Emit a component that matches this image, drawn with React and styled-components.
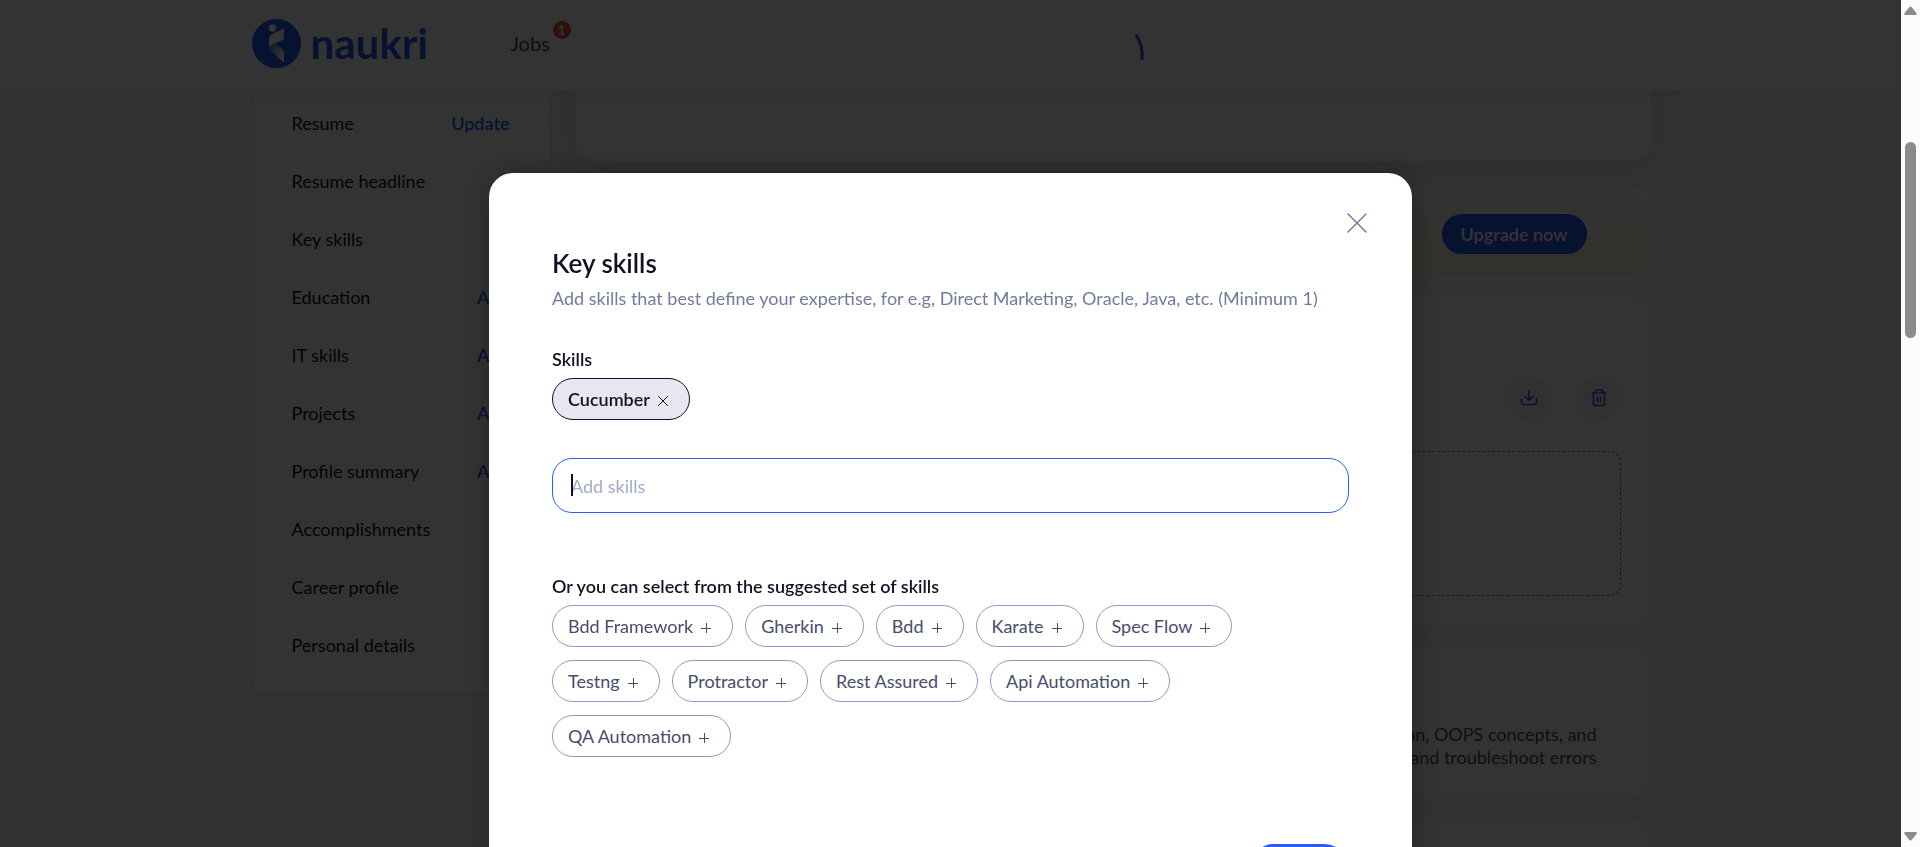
import React from 'react';
import styled, { createGlobalStyle } from 'styled-components';

const blue = '#275df5';
const ink = '#121224';
const slate = '#474d6a';
const muted = '#717b9e';

const Global = createGlobalStyle`
  * { box-sizing: border-box; }
  body {
    margin: 0;
    font: 400 18px/24px Lato, "Liberation Sans", sans-serif;
    color: ${ink};
    background: #f8f9fa;
    overflow: hidden;
  }
  h1, h2, p, ul { margin: 0; padding: 0; font: inherit; }
  ul { list-style: none; }
  a { color: inherit; text-decoration: none; }
  button, input { font: inherit; color: inherit; margin: 0; }
  button { cursor: pointer; }
  svg { display: block; flex: none; }
`;

const Viewport = styled.div`
  display: grid;
  grid-template-columns: minmax(0, 1fr) 19px;
  height: 100vh;
  overflow: hidden;
`;

const Page = styled.div`
  overflow: hidden;
`;

const Container = styled.div`
  display: flex;
  width: 100%;
  max-width: 1400px;
  margin: 0 auto;
`;

const Header = styled.header`
  position: relative;
  z-index: 1;
  background: #fff;
  box-shadow: 0 6px 12px rgba(30, 10, 58, 0.04);
`;

const HeaderInner = styled(Container)`
  align-items: center;
  height: 90px;
`;

const Logo = styled.a`
  display: flex;
  align-items: center;
  gap: 10px;
  width: 260px;
  color: ${blue};
  font-size: 42px;
  line-height: 48px;
  font-weight: 700;
  padding-bottom: 4px;
`;

const Jobs = styled.a`
  position: relative;
  padding-bottom: 4px;
  font-size: 20px;
  line-height: 24px;
  color: ${slate};
`;

const Badge = styled.span`
  position: absolute;
  left: 42px;
  top: -10px;
  width: 18px;
  height: 18px;
  border-radius: 9px;
  background: #f04a3c;
  color: #fff;
  font-size: 14px;
  line-height: 18px;
  font-weight: 700;
  text-align: center;
`;

const LoaderSlot = styled.div`
  flex: 1;
  display: flex;
  justify-content: center;
`;

const Body = styled(Container)`
  align-items: flex-start;
  gap: 25px;
`;

const Sidebar = styled.nav`
  width: 300px;
  flex: none;
  padding: 4px 40px 20px;
  background: #fff;
  border: 1px solid #e3e3ec;
  border-top: 0;
  border-radius: 0 0 12px 12px;
`;

const SideRow = styled.li`
  display: flex;
  align-items: center;
  justify-content: space-between;
  height: 58px;
`;

const SideAction = styled.a`
  color: ${blue};
  font-weight: 600;
`;

const Main = styled.main`
  flex: 1;
  min-width: 0;
  display: flex;
  flex-direction: column;
  gap: 20px;
`;

const Card = styled.section`
  min-height: ${(p) => p.$min}px;
  background: #fff;
  border-radius: 22px;
  box-shadow: 0 0 16px rgba(30, 10, 58, 0.06);
`;

const TopCard = styled(Card)`
  border-radius: 0 0 20px 20px;
  margin-bottom: 5px;
  box-shadow: 0 0 50px rgba(0, 0, 0, 0.14);
`;

const UpgradeCard = styled(Card)`
  display: flex;
  justify-content: flex-end;
  align-items: center;
  padding: 5px 64px 0 30px;
  background: linear-gradient(#fdfdfa, #fbf1dc);
  box-shadow: none;
`;

const UpgradeButton = styled.button`
  height: 40px;
  padding: 0 19px;
  border: 0;
  border-radius: 20px;
  background: ${blue};
  color: #fff;
  font-weight: 600;
`;

const ResumeCard = styled(Card)`
  padding: 80px 30px 30px;
`;

const ResumeActions = styled.div`
  display: flex;
  justify-content: flex-end;
  gap: 26px;
  margin-bottom: 31px;
`;

const RoundButton = styled.button`
  display: grid;
  place-items: center;
  width: 44px;
  height: 44px;
  border: 0;
  padding: 0;
  border-radius: 22px;
  background: #f6f6fb;
  color: ${blue};
`;

const DropZone = styled.div`
  height: 145px;
  border: 1px dashed ${muted};
  border-radius: 12px;
`;

const HeadlineCard = styled(Card)`
  padding: 77px 54px 29px 30px;
  line-height: 23px;
  color: ${slate};
  text-align: right;
`;

const ScrollTrack = styled.div`
  display: flex;
  flex-direction: column;
  align-items: center;
  padding: 6px 0;
  background: #fcfcfc;
`;

const ScrollThumb = styled.div`
  width: 11px;
  height: 196px;
  margin: 127px 0 auto;
  border-radius: 6px;
  background: #8b8b8b;
`;

const Overlay = styled.div`
  position: fixed;
  inset: 0 19px 0 0;
  z-index: 2;
  display: flex;
  justify-content: center;
  align-items: flex-start;
  padding-top: 173px;
  overflow: hidden;
  background: rgba(0, 0, 0, 0.8);
`;

const Modal = styled.div`
  display: flex;
  flex-direction: column;
  width: 923px;
  max-width: 100%;
  padding: 34px 63px 40px;
  border-radius: 24px;
  background: #fff;
  box-shadow: 0 0 30px rgba(0, 0, 0, 0.3);
`;

const CloseButton = styled.button`
  display: grid;
  place-items: center;
  align-self: flex-end;
  width: 32px;
  height: 32px;
  margin: 0 -24px 8px 0;
  padding: 0;
  border: 0;
  background: none;
  color: ${muted};
`;

const Title = styled.h1`
  font-size: 26px;
  line-height: 32px;
  font-weight: 600;
  margin-bottom: 7px;
`;

const Hint = styled.p`
  color: ${muted};
  margin-bottom: 37px;
`;

const Label = styled.h2`
  font-weight: 600;
  margin-bottom: 7px;
`;

const ChipList = styled.div`
  display: flex;
  flex-wrap: wrap;
  gap: 13px 12px;
  max-width: 740px;
`;

const Chip = styled.button`
  display: flex;
  align-items: center;
  gap: 8px;
  height: 42px;
  padding: 0 21px 0 15px;
  border: 1px solid ${(p) => (p.$selected ? ink : '#9298c4')};
  border-radius: 21px;
  background: ${(p) => (p.$selected ? '#e7e7f1' : '#fff')};
  color: ${(p) => (p.$selected ? ink : slate)};
  font-weight: ${(p) => (p.$selected ? 600 : 400)};

  svg { margin-top: 3px; }
`;

const Field = styled.div`
  position: relative;
  margin: 38px 0 61px;
`;

const SkillInput = styled.input`
  display: block;
  width: 100%;
  height: 55px;
  padding: 0 18px;
  border: 1px solid ${blue};
  border-radius: 20px;
  outline: none;
  background: #fff;
  caret-color: transparent;

  &::placeholder { color: #a3a9cc; opacity: 1; }
`;

const Caret = styled.span`
  position: absolute;
  left: 19px;
  top: 16px;
  width: 2px;
  height: 22px;
  background: ${ink};
`;

const SaveButton = styled.button`
  align-self: flex-end;
  width: 100px;
  height: 50px;
  margin-top: 87px;
  border: 0;
  border-radius: 25px;
  background: ${blue};
`;

const sections = [
  ['Resume', 'Update'],
  ['Resume headline'],
  ['Key skills'],
  ['Education', 'Add'],
  ['IT skills', 'Add'],
  ['Projects', 'Add'],
  ['Profile summary', 'Add'],
  ['Accomplishments'],
  ['Career profile'],
  ['Personal details'],
];

const suggestions = [
  'Bdd Framework', 'Gherkin', 'Bdd', 'Karate', 'Spec Flow', 'Testng',
  'Protractor', 'Rest Assured', 'Api Automation', 'QA Automation',
];

const LogoMark = () => (
  <svg width="50" height="50" viewBox="0 0 50 50" aria-hidden="true">
    <defs>
      <linearGradient id="leg" x1="0.2" y1="0.1" x2="0.8" y2="0.7">
        <stop offset="0" stopColor="#fff" stopOpacity="0.25" />
        <stop offset="1" stopColor="#fff" />
      </linearGradient>
    </defs>
    <circle cx="25.500" cy="25.500" r="24.500" fill={blue} />
    <circle cx="21.500" cy="10" r="3.700" fill="#fff" />
    <path d="M18 28.500V21Q18 17.500 21 16L33 10.500V20Q32.500 21.500 31 22.500L23 26Z" fill="#fff" />
    <path d="M18 28.500L24 25.500L32 32Q33 33 33 34.500V44.500L20 33Q18 31.500 18 28.500Z" fill="url(#leg)" />
  </svg>
);

const CrossIcon = ({ size, weight }) => (
  <svg width={size} height={size} viewBox="0 0 20 20" fill="none" stroke="currentColor" strokeWidth={weight} strokeLinecap="round" aria-hidden="true">
    <path d="M1 1L19 19M19 1L1 19" />
  </svg>
);

const PlusIcon = () => (
  <svg width="10" height="10" viewBox="0 0 10 10" stroke="currentColor" strokeWidth="1" aria-hidden="true">
    <path d="M5.500 0V10M0 5.500H10" />
  </svg>
);

const DownloadIcon = () => (
  <svg width="18" height="18" viewBox="0 0 18 18" fill="none" stroke="currentColor" strokeWidth="1.600" strokeLinecap="round" strokeLinejoin="round" aria-hidden="true">
    <path d="M1.500 10V13.500Q1.500 15.500 3.500 15.500H14.500Q16.500 15.500 16.500 13.500V10M9 1.500V11M5 7.500L9 11.500L13 7.500" />
  </svg>
);

const TrashIcon = () => (
  <svg width="18" height="18" viewBox="0 0 18 18" fill="none" stroke="currentColor" strokeWidth="1.600" strokeLinecap="round" strokeLinejoin="round" aria-hidden="true">
    <path d="M2 4H16M5.500 4V2Q5.500 1 6.500 1H11.500Q12.500 1 12.500 2V4M3.500 4V15Q3.500 16.500 5 16.500H13Q14.500 16.500 14.500 15V4M7.500 8V12.500M10.500 8V12.500" />
  </svg>
);

const Loader = () => (
  <svg width="94" height="90" viewBox="0 0 94 90" fill="none" stroke={blue} strokeWidth="3" aria-hidden="true">
    <path d="M83 35Q90.500 46 89 59.500" />
  </svg>
);

const Arrow = ({ down }) => (
  <svg width="13" height="9" viewBox="0 0 13 9" fill="#8b8b8b" aria-hidden="true">
    <path d={down ? 'M1 0H12Q13.500 1 12 2.500L7.500 8Q6.500 9 5.500 8L1 2.500Q-0.500 1 1 0Z' : 'M1 9H12Q13.500 8 12 6.500L7.500 1Q6.500 0 5.500 1L1 6.500Q-0.500 8 1 9Z'} />
  </svg>
);

export default function App() {
  return (
    <>
      <Global />
      <Viewport>
        <Page>
          <Header>
            <HeaderInner>
              <Logo href="#home"><LogoMark />naukri</Logo>
              <Jobs href="#jobs">Jobs<Badge>1</Badge></Jobs>
              <LoaderSlot><Loader /></LoaderSlot>
            </HeaderInner>
          </Header>
          <Body>
            <Sidebar>
              <ul>
                {sections.map(([name, action]) => (
                  <SideRow key={name}>
                    <a href="#section">{name}</a>
                    {action && <SideAction href="#edit">{action}</SideAction>}
                  </SideRow>
                ))}
              </ul>
            </Sidebar>
            <Main>
              <TopCard $min={71} />
              <UpgradeCard $min={90}><UpgradeButton>Upgrade now</UpgradeButton></UpgradeCard>
              <ResumeCard $min={330}>
                <ResumeActions>
                  <RoundButton aria-label="Download resume"><DownloadIcon /></RoundButton>
                  <RoundButton aria-label="Delete resume"><TrashIcon /></RoundButton>
                </ResumeActions>
                <DropZone />
              </ResumeCard>
              <HeadlineCard $min={152}>
                <p>Automation, OOPS concepts, and</p>
                <p>and troubleshoot errors</p>
              </HeadlineCard>
              <Card $min={200} />
            </Main>
          </Body>
        </Page>
        <ScrollTrack aria-hidden="true">
          <Arrow />
          <ScrollThumb />
          <Arrow down />
        </ScrollTrack>
      </Viewport>
      <Overlay>
        <Modal role="dialog" aria-modal="true" aria-labelledby="skills-title">
          <CloseButton aria-label="Close"><CrossIcon size={20} weight={1.5} /></CloseButton>
          <Title id="skills-title">Key skills</Title>
          <Hint>Add skills that best define your expertise, for e.g, Direct Marketing, Oracle, Java, etc. (Minimum 1)</Hint>
          <Label as="label" htmlFor="skill-input">Skills</Label>
          <ChipList>
            <Chip $selected>Cucumber<CrossIcon size={10} weight={2} /></Chip>
          </ChipList>
          <Field>
            <SkillInput id="skill-input" type="text" placeholder="Add skills" />
            <Caret />
          </Field>
          <Label>Or you can select from the suggested set of skills</Label>
          <ChipList>
            {suggestions.map((name) => (
              <Chip key={name}>{name}<PlusIcon /></Chip>
            ))}
          </ChipList>
          <SaveButton aria-label="Save" />
        </Modal>
      </Overlay>
    </>
  );
}
